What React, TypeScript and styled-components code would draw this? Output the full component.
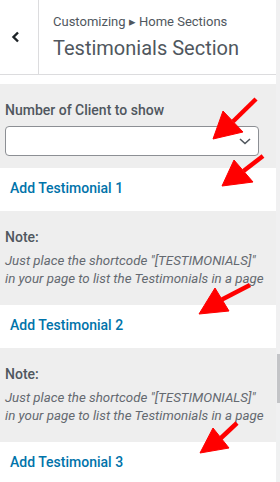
import React from "react";
import styled, { createGlobalStyle } from "styled-components";

const Global = createGlobalStyle`
  html, body { margin: 0; padding: 0; background: #eeeeee; overflow: hidden; }
  body { font-family: Roboto, "Noto Sans", "Liberation Sans", sans-serif; }
`;

const Page = styled.div`
  position: relative;
  display: flex;
  width: 280px;
  height: 482px;
  overflow: hidden;
`;

const Panel = styled.div`
  width: 276px;
  display: flex;
  flex-direction: column;
  background: #eeeeee;
`;

const ScrollTrack = styled.div`
  position: relative;
  width: 4px;
  background: #f0f0f1;
`;

const ScrollThumb = styled.div`
  position: absolute;
  left: 1px;
  right: 0;
  top: 354px;
  height: 49px;
  background: #c3c4c7;
`;

const Header = styled.div`
  display: flex;
  height: 74px;
  background: #fff;
  border-bottom: 1px solid #dcdcde;
  flex-shrink: 0;
`;

const BackButton = styled.div`
  width: 39px;
  border-right: 1px solid #dcdcde;
  display: flex;
  align-items: center;
  justify-content: flex-start;
  padding-left: 11px;
  box-sizing: border-box;
`;

const Titles = styled.div`
  display: flex;
  flex-direction: column;
  padding: 12px 0 0 14px;
  color: #50575e;
`;

const Crumb = styled.div`
  font-size: 13px;
  line-height: 20px;
`;

const Title = styled.div`
  font-size: 20px;
  line-height: 26px;
  margin-top: 3px;
`;

const Spacer = styled.div`
  height: 9px;
  background: #fff;
  flex-shrink: 0;
`;

const ControlSection = styled.div`
  padding: 17px 17px 12px 5px;
  flex-shrink: 0;
`;

const Label = styled.div`
  font-size: 14px;
  font-weight: 500;
  line-height: 18px;
  color: #50575e;
`;

const Select = styled.div`
  margin-top: 7px;
  height: 30px;
  width: 254px;
  box-sizing: border-box;
  border: 1px solid #8c8f94;
  border-radius: 4px;
  background: #fff;
  display: flex;
  align-items: center;
  justify-content: flex-end;
  padding-right: 7px;
`;

const AddRow = styled.div`
  height: 43px;
  box-sizing: border-box;
  background: #fff;
  padding: 11px 0 0 10px;
  font-size: 14px;
  font-weight: 500;
  line-height: 18px;
  color: #0073aa;
  flex-shrink: 0;
`;

const NoteSection = styled.div`
  height: 94px;
  box-sizing: border-box;
  padding: 17px 0 0 5px;
  flex-shrink: 0;
`;

const NoteText = styled.div`
  margin-top: 6px;
  font-size: 13.3px;
  font-style: italic;
  line-height: 18px;
  color: #646970;
  white-space: nowrap;
`;

const Overlay = styled.svg`
  position: absolute;
  left: 0;
  top: 0;
  pointer-events: none;
`;

type ArrowSpec = { tail: [number, number]; tip: [number, number]; c1: [number, number]; c2: [number, number] };

const arrows: ArrowSpec[] = [
  { tail: [256, 99], tip: [213, 139], c1: [223, 111], c2: [243, 132] },
  { tail: [263, 156], tip: [222, 186], c1: [234, 160], c2: [253, 182] },
  { tail: [250, 285], tip: [199, 314], c1: [215, 288], c2: [229, 311] },
  { tail: [237, 423], tip: [200, 453], c1: [213, 428], c2: [229, 448] },
];

const Arrow: React.FC<{ a: ArrowSpec }> = ({ a }) => {
  const mx = (a.c1[0] + a.c2[0]) / 2;
  const my = (a.c1[1] + a.c2[1]) / 2;
  return (
    <g fill="#ff0000" stroke="#ff0000">
      <line x1={a.tail[0]} y1={a.tail[1]} x2={mx} y2={my} strokeWidth={4.5} />
      <polygon
        points={`${a.tip[0]},${a.tip[1]} ${a.c1[0]},${a.c1[1]} ${a.c2[0]},${a.c2[1]}`}
        strokeWidth={1}
        strokeLinejoin="round"
      />
    </g>
  );
};

const Note: React.FC = () => (
  <NoteSection>
    <Label>Note:</Label>
    <NoteText>
      Just place the shortcode "[TESTIMONIALS]"
      <br />
      in your page to list the Testimonials in a page
    </NoteText>
  </NoteSection>
);

export default function App() {
  return (
    <>
      <Global />
      <Page>
        <Panel>
          <Header>
            <BackButton>
              <svg width="10" height="12" viewBox="0 0 10 12">
                <polyline points="7,1.5 2.5,6 7,10.5" fill="none" stroke="#1d2327" strokeWidth="2.4" />
              </svg>
            </BackButton>
            <Titles>
              <Crumb>Customizing ▸ Home Sections</Crumb>
              <Title>Testimonials Section</Title>
            </Titles>
          </Header>
          <Spacer />
          <ControlSection>
            <Label>Number of Client to show</Label>
            <Select>
              <svg width="12" height="7" viewBox="0 0 12 7">
                <polyline points="1,1 6,5.5 11,1" fill="none" stroke="#50575e" strokeWidth="1.6" />
              </svg>
            </Select>
          </ControlSection>
          <AddRow>Add Testimonial 1</AddRow>
          <Note />
          <AddRow>Add Testimonial 2</AddRow>
          <Note />
          <AddRow>Add Testimonial 3</AddRow>
        </Panel>
        <ScrollTrack>
          <ScrollThumb />
        </ScrollTrack>
        <Overlay width="280" height="482" viewBox="0 0 280 482">
          {arrows.map((a, i) => (
            <Arrow key={i} a={a} />
          ))}
        </Overlay>
      </Page>
    </>
  );
}
